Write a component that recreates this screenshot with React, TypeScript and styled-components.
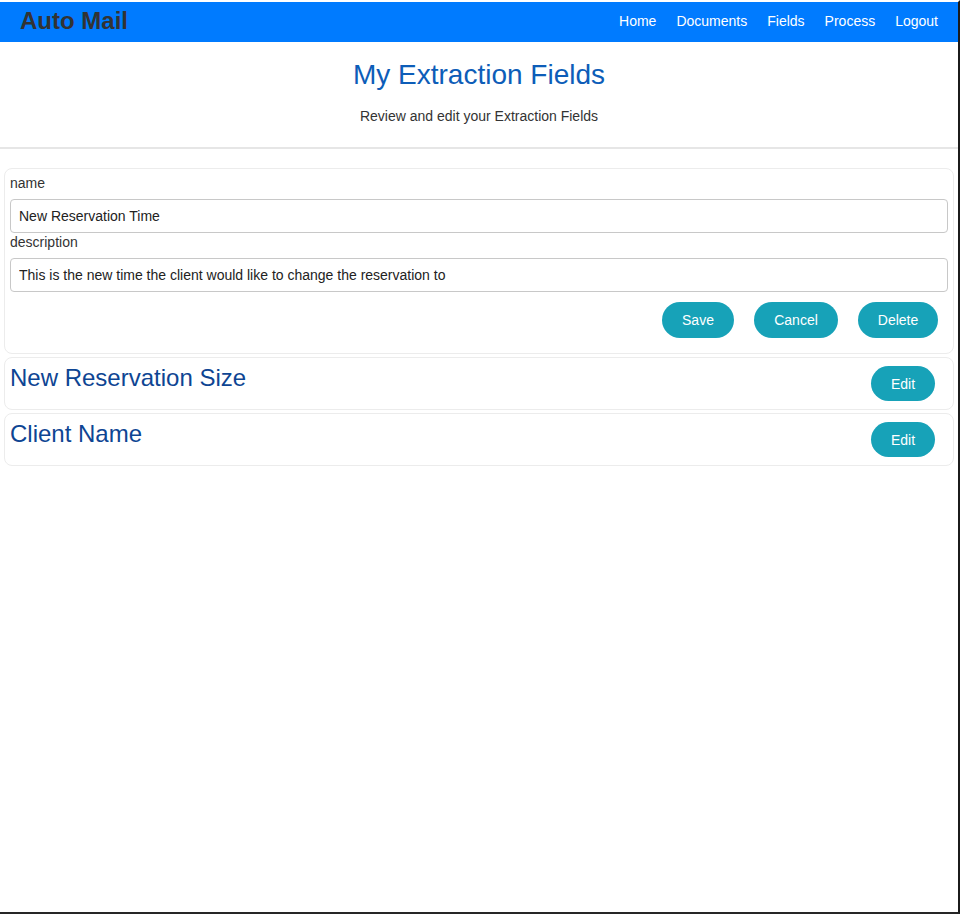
import React from "react";
import styled, { createGlobalStyle } from "styled-components";

const Global = createGlobalStyle`
  html, body { margin: 0; padding: 0; background: #fff; }
  body { font-family: "Liberation Sans", Arial, sans-serif; color: #333; }
  * { box-sizing: border-box; }
`;

const Frame = styled.div`
  width: 960px;
  height: 914px;
  border-top: 2px solid #fff;
  border-right: 2px solid #1b1b1b;
  border-bottom: 2px solid #262626;
  display: flex;
  flex-direction: column;
  overflow: hidden;
`;

const NavBar = styled.nav`
  height: 40px;
  background: #007bff;
  display: flex;
  align-items: center;
  justify-content: space-between;
  padding: 0 20px 2px 20px;
`;

const Brand = styled.div`
  font-size: 24px;
  font-weight: bold;
  color: #333;
  line-height: 28px;
`;

const NavLinks = styled.div`
  display: flex;
  gap: 20px;
`;

const NavLink = styled.a`
  color: #fff;
  font-size: 14px;
  line-height: 16px;
  text-decoration: none;
`;

const Header = styled.header`
  display: flex;
  flex-direction: column;
  align-items: center;
  padding-top: 17px;
  height: 107px;
  border-bottom: 2px solid #e6e6e6;
`;

const Title = styled.h1`
  margin: 0;
  font-size: 28px;
  font-weight: normal;
  color: #0d5db8;
  line-height: 32px;
`;

const Subtitle = styled.p`
  margin: 0;
  margin-top: 17px;
  font-size: 14px;
  line-height: 16px;
  color: #333;
`;

const List = styled.main`
  display: flex;
  flex-direction: column;
  gap: 3px;
  padding: 19px 4px 0 4px;
`;

const Card = styled.section`
  border: 1px solid #ececec;
  border-radius: 8px;
  padding: 5px 5px 15px 5px;
`;

const Label = styled.div`
  font-size: 14px;
  line-height: 18px;
  color: #333;
`;

const Input = styled.input`
  display: block;
  width: 100%;
  height: 34px;
  margin: 7px 0 0 0;
  border: 1px solid #c8c8c8;
  border-radius: 4px;
  padding: 0 8px;
  font-family: "Liberation Sans", Arial, sans-serif;
  font-size: 14px;
  color: #222;
  background: #fff;
`;

const Actions = styled.div`
  display: flex;
  justify-content: flex-end;
  gap: 20px;
  margin-top: 10px;
  padding-right: 10px;
`;

const Pill = styled.button<{ $w: number; $h?: number }>`
  width: ${(p) => p.$w}px;
  height: ${(p) => p.$h ?? 36}px;
  border: none;
  border-radius: 18px;
  background: #17a2b8;
  color: #fff;
  font-family: "Liberation Sans", Arial, sans-serif;
  font-size: 14px;
  padding: 0;
`;

const Row = styled.section`
  border: 1px solid #ececec;
  border-radius: 8px;
  height: 53px;
  display: flex;
  justify-content: space-between;
  align-items: flex-start;
  padding: 8px 18px 0 5px;
`;

const RowTitle = styled.h2`
  margin: 0;
  font-size: 24px;
  font-weight: normal;
  color: #0e4593;
  line-height: 24px;
`;

export default function App() {
  const fields = ["New Reservation Size", "Client Name"];
  return (
    <>
      <Global />
      <Frame>
        <NavBar>
          <Brand>Auto Mail</Brand>
          <NavLinks>
            {["Home", "Documents", "Fields", "Process", "Logout"].map((l) => (
              <NavLink key={l} href="#">{l}</NavLink>
            ))}
          </NavLinks>
        </NavBar>
        <Header>
          <Title>My Extraction Fields</Title>
          <Subtitle>Review and edit your Extraction Fields</Subtitle>
        </Header>
        <List>
          <Card>
            <Label>name</Label>
            <Input defaultValue="New Reservation Time" />
            <Label>description</Label>
            <Input defaultValue="This is the new time the client would like to change the reservation to" />
            <Actions>
              <Pill $w={72}>Save</Pill>
              <Pill $w={84}>Cancel</Pill>
              <Pill $w={80}>Delete</Pill>
            </Actions>
          </Card>
          {fields.map((f) => (
            <Row key={f}>
              <RowTitle>{f}</RowTitle>
              <Pill $w={64} $h={35}>Edit</Pill>
            </Row>
          ))}
        </List>
      </Frame>
    </>
  );
}
